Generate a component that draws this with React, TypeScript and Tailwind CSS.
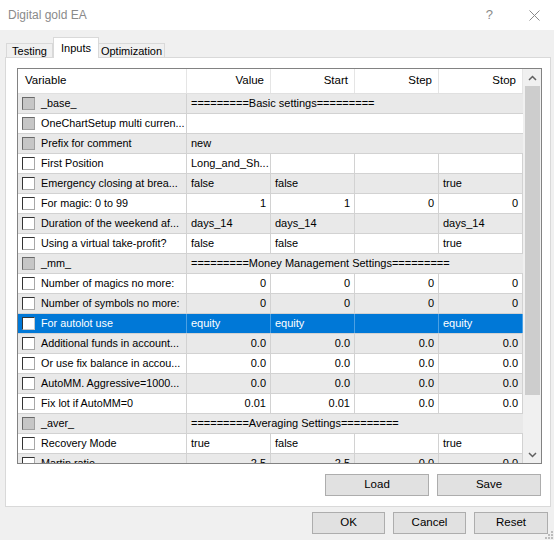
import React from 'react';

type Row = {
	name: string;
	box: 'grey' | 'white';
	kind: 'section' | 'span' | 'cells';
	text?: string;
	cells?: string[];
	selected?: boolean;
};

const rows: Row[] = [
	{ name: '_base_', box: 'grey', kind: 'section', text: '=========Basic settings=========' },
	{ name: 'OneChartSetup multi curren...', box: 'grey', kind: 'span', text: '' },
	{ name: 'Prefix for comment', box: 'grey', kind: 'span', text: 'new' },
	{ name: 'First Position', box: 'white', kind: 'cells', cells: ['Long_and_Sh...', '', '', ''] },
	{ name: 'Emergency closing at brea...', box: 'white', kind: 'cells', cells: ['false', 'false', '', 'true'] },
	{ name: 'For magic: 0 to 99', box: 'white', kind: 'cells', cells: ['1', '1', '0', '0'] },
	{ name: 'Duration of the weekend af...', box: 'white', kind: 'cells', cells: ['days_14', 'days_14', '', 'days_14'] },
	{ name: 'Using a virtual take-profit?', box: 'white', kind: 'cells', cells: ['false', 'false', '', 'true'] },
	{ name: '_mm_', box: 'grey', kind: 'section', text: '=========Money Management Settings=========' },
	{ name: 'Number of magics no more:', box: 'white', kind: 'cells', cells: ['0', '0', '0', '0'] },
	{ name: 'Number of symbols no more:', box: 'white', kind: 'cells', cells: ['0', '0', '0', '0'] },
	{ name: 'For autolot use', box: 'white', kind: 'cells', cells: ['equity', 'equity', '', 'equity'], selected: true },
	{ name: 'Additional funds in account...', box: 'white', kind: 'cells', cells: ['0.0', '0.0', '0.0', '0.0'] },
	{ name: 'Or use fix balance in accou...', box: 'white', kind: 'cells', cells: ['0.0', '0.0', '0.0', '0.0'] },
	{ name: 'AutoMM. Aggressive=1000...', box: 'white', kind: 'cells', cells: ['0.0', '0.0', '0.0', '0.0'] },
	{ name: 'Fix lot if AutoMM=0', box: 'white', kind: 'cells', cells: ['0.01', '0.01', '0.0', '0.0'] },
	{ name: '_aver_', box: 'grey', kind: 'section', text: '=========Averaging Settings=========' },
	{ name: 'Recovery Mode', box: 'white', kind: 'cells', cells: ['true', 'false', '', 'true'] },
	{ name: 'Martin ratio', box: 'white', kind: 'cells', cells: ['2.5', '2.5', '0.0', '0.0'] },
];

const isNumber = (s: string) => /^[0-9.]+$/.test(s);

const CheckBox = ({ kind, selected }: { kind: 'grey' | 'white'; selected?: boolean }) => (
	<div
		className={
			kind === 'grey'
				? 'h-[13px] w-[13px] shrink-0 border border-t-[#696969] border-l-[#696969] border-b-[#a0a0a0] border-r-[#a0a0a0] bg-[#c6c6c6]'
				: selected
					? 'h-[13px] w-[13px] shrink-0 border border-t-[#333] border-l-[#333] border-b-[#c8c8c8] border-r-[#c8c8c8] bg-white'
					: 'h-[13px] w-[13px] shrink-0 border border-t-[#333] border-l-[#333] border-b-[#a8a8a8] border-r-[#a8a8a8] bg-white'
		}
	/>
);

const Chevron = ({ up }: { up?: boolean }) => (
	<svg width="9" height="6" viewBox="0 0 9 6" fill="none">
		<path d={up ? 'M1 5 L4.5 1.5 L8 5' : 'M1 1 L4.5 4.5 L8 1'} stroke="#606060" strokeWidth="1.5" />
	</svg>
);

const GridRow = ({ row, idx }: { row: Row; idx: number }) => {
	const bg = row.selected ? 'bg-[#0078d7] text-white' : idx % 2 === 0 ? 'bg-[#e9e9e9]' : 'bg-white';
	const sep = row.selected ? 'border-[#4ca0e3]' : 'border-[#d2d2d2]';
	return (
		<div className={`flex h-[20px] shrink-0 border-b border-[#d2d2d2] ${bg}`}>
			<div className={`flex w-[169px] shrink-0 items-center gap-[6px] overflow-hidden border-r ${sep} pl-[4px]`}>
				<CheckBox kind={row.box} selected={row.selected} />
				<span className="whitespace-nowrap text-[10.8px]">{row.name}</span>
			</div>
			{row.kind === 'cells' ? (
				row.cells!.map((c, i) => (
					<div
						key={i}
						className={`flex w-[84px] shrink-0 items-center border-r ${sep} ${isNumber(c) ? 'justify-end pr-[4px]' : 'pl-[4px]'}`}
					>
						{c}
					</div>
				))
			) : (
				<div className="flex flex-1 items-center whitespace-nowrap pl-[4px]">{row.text}</div>
			)}
		</div>
	);
};

export default function App() {
	return (
		<div
			className="relative flex h-[540px] w-[554px] flex-col overflow-hidden bg-[#f0f0f0] text-[11px] text-black"
			style={{ fontFamily: '"Liberation Sans", Arial, sans-serif' }}
		>
			{/* title bar */}
			<div className="flex h-[30px] shrink-0 items-center justify-between bg-white pl-[8px] pr-[14px]">
				<span className="text-[12px] text-[#8a8a8a]">Digital gold EA</span>
				<div className="flex items-center gap-[36px] text-[#8a8a8a]">
					<span className="text-[13px]">?</span>
					<svg width="11" height="11" viewBox="0 0 11 11">
						<path d="M0.5 0.5 L10.5 10.5 M10.5 0.5 L0.5 10.5" stroke="#8a8a8a" strokeWidth="1" />
					</svg>
				</div>
			</div>

			{/* tabs */}
			<div className="mt-[7px] flex h-[20px] shrink-0 items-end pl-[6px]">
				<div className="flex h-[14px] w-[47px] items-center justify-center border border-b-0 border-[#d9d9d9] bg-[#f0f0f0] pt-[1px]">
					Testing
				</div>
				<div className="relative z-10 mb-[-1px] flex h-[21px] w-[46px] items-start justify-center border border-b-0 border-[#d9d9d9] bg-white pt-[2px]">
					Inputs
				</div>
				<div className="flex h-[14px] w-[66px] items-center justify-center border border-b-0 border-l-0 border-[#d9d9d9] bg-[#f0f0f0] pt-[1px]">
					Optimization
				</div>
			</div>

			{/* panel */}
			<div className="ml-[5px] flex h-[450px] w-[546px] shrink-0 flex-col border border-[#d9d9d9] bg-white pl-[11px] pt-[10px]">
				<div className="flex h-[396px] w-[525px] border border-[#828282]">
					<div className="flex w-[505px] flex-col overflow-hidden">
						<div className="flex h-[25px] shrink-0 border-b border-[#e0e0e0] bg-white">
							<div className="flex w-[169px] items-center border-r border-[#e5e5e5] pl-[7px] text-[11.5px]">Variable</div>
							{['Value', 'Start', 'Step', 'Stop'].map((h) => (
								<div key={h} className="flex w-[84px] items-center justify-end border-r border-[#e5e5e5] pr-[6px] text-[11.5px]">
									{h}
								</div>
							))}
						</div>
						{rows.map((r, i) => (
							<GridRow key={i} row={r} idx={i} />
						))}
					</div>
					{/* scrollbar */}
					<div className="flex w-[18px] flex-col items-center bg-[#f0f0f0]">
						<div className="flex h-[17px] w-full items-center justify-center">
							<Chevron up />
						</div>
						<div className="h-[309px] w-[15px] bg-[#cdcdcd]" />
						<div className="flex-1" />
						<div className="flex h-[17px] w-full items-center justify-center">
							<Chevron />
						</div>
					</div>
				</div>
				<div className="mt-[10px] flex w-[525px] justify-end gap-[8px] pr-[1px]">
					<button className="h-[22px] w-[104px] border border-[#adadad] bg-[#e1e1e1] text-[11.5px]">Load</button>
					<button className="h-[22px] w-[104px] border border-[#adadad] bg-[#e1e1e1] text-[11.5px]">Save</button>
				</div>
			</div>

			{/* dialog buttons */}
			<div className="mt-[5px] flex justify-end gap-[8px] pr-[6px]">
				<button className="h-[22px] w-[73px] border border-[#adadad] bg-[#e1e1e1] text-[11.5px]">OK</button>
				<button className="h-[22px] w-[73px] border border-[#adadad] bg-[#e1e1e1] text-[11.5px]">Cancel</button>
				<button className="h-[22px] w-[74px] border border-[#adadad] bg-[#e1e1e1] text-[11.5px]">Reset</button>
			</div>

			{/* resize grip */}
			<svg className="absolute bottom-[1px] right-[1px]" width="10" height="10" viewBox="0 0 10 10">
				{[
					[8, 2],
					[8, 5],
					[5, 5],
					[8, 8],
					[5, 8],
					[2, 8],
				].map(([x, y], i) => (
					<rect key={i} x={x} y={y} width="2" height="2" fill="#bcbcbc" />
				))}
			</svg>
		</div>
	);
}
